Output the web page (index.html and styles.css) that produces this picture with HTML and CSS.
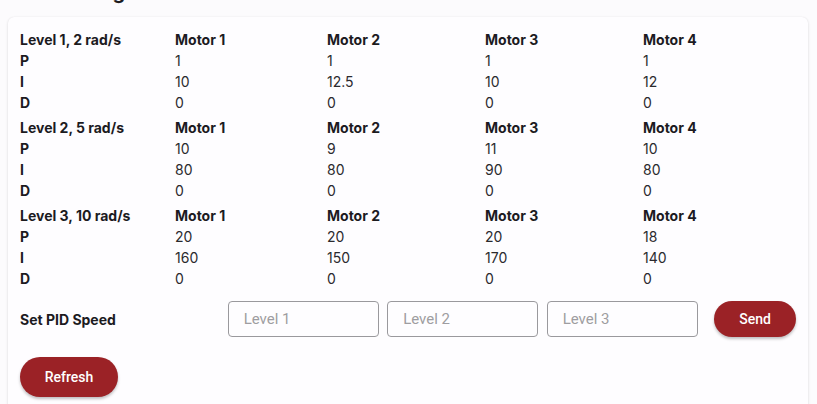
FILE: index.html
```
<!DOCTYPE html>
<html lang="en">
<head>
    <meta charset="UTF-8">
    <meta name="viewport" content="width=device-width, initial-scale=1.0">
    <title>PID Tuning</title>
    <link rel="stylesheet" href="styles.css">
</head>
<body>
    <div class="page">
        <h2 class="page-title">PID Tuning</h2>

        <div class="card">
            <!-- Level 1 -->
            <div class="pid-group">
                <div class="cell head">Level 1, 2 rad/s</div>
                <div class="cell head">Motor 1</div>
                <div class="cell head">Motor 2</div>
                <div class="cell head">Motor 3</div>
                <div class="cell head">Motor 4</div>

                <div class="cell head">P</div>
                <div class="cell">1</div><div class="cell">1</div><div class="cell">1</div><div class="cell">1</div>
                <div class="cell head">I</div>
                <div class="cell">10</div><div class="cell">12.5</div><div class="cell">10</div><div class="cell">12</div>
                <div class="cell head">D</div>
                <div class="cell">0</div><div class="cell">0</div><div class="cell">0</div><div class="cell">0</div>
            </div>

            <!-- Level 2 -->
            <div class="pid-group">
                <div class="cell head">Level 2, 5 rad/s</div>
                <div class="cell head">Motor 1</div>
                <div class="cell head">Motor 2</div>
                <div class="cell head">Motor 3</div>
                <div class="cell head">Motor 4</div>

                <div class="cell head">P</div>
                <div class="cell">10</div><div class="cell">9</div><div class="cell">11</div><div class="cell">10</div>
                <div class="cell head">I</div>
                <div class="cell">80</div><div class="cell">80</div><div class="cell">90</div><div class="cell">80</div>
                <div class="cell head">D</div>
                <div class="cell">0</div><div class="cell">0</div><div class="cell">0</div><div class="cell">0</div>
            </div>

            <!-- Level 3 -->
            <div class="pid-group">
                <div class="cell head">Level 3, 10 rad/s</div>
                <div class="cell head">Motor 1</div>
                <div class="cell head">Motor 2</div>
                <div class="cell head">Motor 3</div>
                <div class="cell head">Motor 4</div>

                <div class="cell head">P</div>
                <div class="cell">20</div><div class="cell">20</div><div class="cell">20</div><div class="cell">18</div>
                <div class="cell head">I</div>
                <div class="cell">160</div><div class="cell">150</div><div class="cell">170</div><div class="cell">140</div>
                <div class="cell head">D</div>
                <div class="cell">0</div><div class="cell">0</div><div class="cell">0</div><div class="cell">0</div>
            </div>

            <!-- Set PID Speed -->
            <div class="speed-row">
                <div class="speed-label">Set PID Speed</div>
                <input class="speed-input" type="text" placeholder="Level 1">
                <input class="speed-input" type="text" placeholder="Level 2">
                <input class="speed-input" type="text" placeholder="Level 3">
                <button class="btn btn-send">Send</button>
            </div>

            <div class="actions">
                <button class="btn btn-refresh">Refresh</button>
            </div>
        </div>
    </div>
</body>
</html>
```

FILE: styles.css
```
/* Global */
body, html {
    margin: 0;
    padding: 0;
    background-color: #fcfbfd;
    color: #1c1b1f;
    font-family: 'Inter', 'Roboto', sans-serif;
    font-size: 14px;
    overflow: hidden;
}

.page {
    padding: 0 9px 0 8px;
}

.page-title {
    margin: -20px 0 13px 12px;
    font-size: 20px;
    line-height: 24px;
    font-weight: 700;
}

/* Card */
.card {
    background: #fefdff;
    border-radius: 6px;
    box-shadow: 0 1px 3px rgba(0, 0, 0, 0.12), 0 0 1px rgba(0, 0, 0, 0.08);
    padding: 12px 12px 20px 12px;
}

/* PID table */
.pid-group {
    display: grid;
    grid-template-columns: 155px 152px 158px 158px 1fr;
    margin-bottom: 4px;
}

.cell {
    height: 21px;
    line-height: 21px;
    color: #2b2a2e;
}

.cell.head {
    font-weight: 700;
    color: #1c1b1f;
}

/* Set PID Speed */
.speed-row {
    display: flex;
    align-items: center;
    margin-top: 12px;
}

.speed-label {
    width: 208px;
    font-weight: 700;
}

.speed-input {
    width: 151px;
    height: 36px;
    box-sizing: border-box;
    border: 1px solid #9a999d;
    border-radius: 4px;
    background: transparent;
    padding: 0 15px;
    margin-right: 8.5px;
    font-family: 'Roboto', sans-serif;
    font-size: 15px;
    color: #1c1b1f;
}

.speed-input::placeholder {
    color: #9e9da1;
}

/* Buttons */
.btn {
    border: none;
    border-radius: 20px;
    background: #9b2226;
    color: #fff;
    font-family: 'Roboto', sans-serif;
    font-size: 14px;
    font-weight: 500;
    cursor: pointer;
    box-shadow: 0 2px 3px rgba(0, 0, 0, 0.25);
}

.btn-send {
    width: 82px;
    height: 36px;
    margin-left: 8px;
}

.actions {
    margin-top: 20px;
}

.btn-refresh {
    width: 98px;
    height: 40px;
}
```
